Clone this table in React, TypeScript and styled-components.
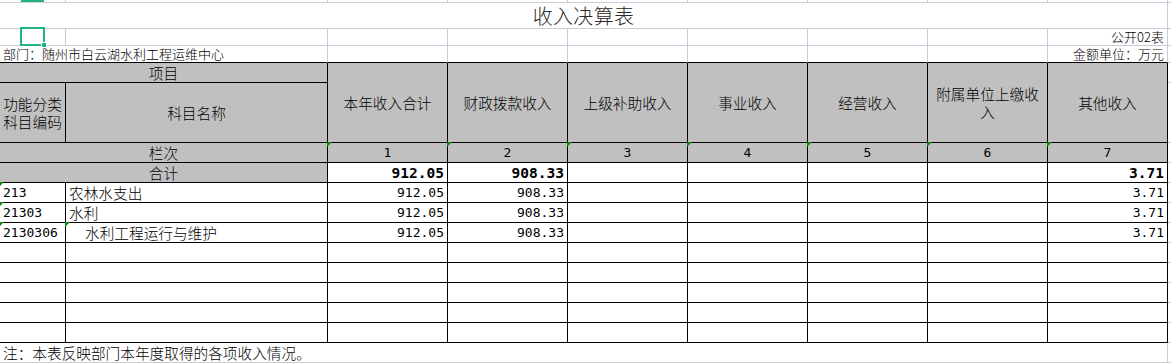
import React from "react";
import styled, { createGlobalStyle, css } from "styled-components";

const GRID = "#c6ccd8";
const INK = "#000";
const HEAD = "#c0c0c0";
const MARK = "#0a8a0a";
const SELECT = "#21b47b";
const CJK = `"Noto Sans CJK SC", "Noto Sans", sans-serif`;
const MONO = `"DejaVu Sans Mono", "Liberation Mono", monospace`;

const Global = createGlobalStyle`
  html, body { margin: 0; padding: 0; background: #fff; }
  body { font-family: ${CJK}; font-weight: 300; color: #000; overflow: hidden; }
`;

const Sheet = styled.div`
  display: grid;
  grid-template-columns: 66px 262px repeat(7, 120px) 3px;
  grid-template-rows: 3px 26px 17px 17px 20px 60px 20px 20px repeat(8, 20px) 20px;
  width: 1171px;
  height: 363px;
`;

type Line = "grid" | "ink";

type CellProps = {
  $span?: number;
  $rows?: number;
  $right?: Line;
  $bottom?: Line;
  $fill?: boolean;
  $align?: "left" | "center" | "right";
  $valign?: "top" | "center" | "bottom";
  $flag?: boolean;
  $wrap?: boolean;
};

const justify = { left: "flex-start", center: "center", right: "flex-end" };
const vert = { top: "flex-start", center: "center", bottom: "flex-end" };

const Cell = styled.div<CellProps>`
  position: relative;
  box-sizing: border-box;
  grid-column: span ${(p) => p.$span ?? 1};
  grid-row: span ${(p) => p.$rows ?? 1};
  border-right: 1px solid ${(p) => (p.$right === "ink" ? INK : GRID)};
  border-bottom: 1px solid ${(p) => (p.$bottom === "ink" ? INK : GRID)};
  background: ${(p) => (p.$fill ? HEAD : "#fff")};
  display: flex;
  justify-content: ${(p) => justify[p.$align ?? "left"]};
  align-items: ${(p) => vert[p.$valign ?? "bottom"]};
  text-align: ${(p) => p.$align ?? "left"};
  padding: 0 3px;
  font-size: 14.67px;
  line-height: 18px;
  white-space: ${(p) => (p.$wrap ? "pre-line" : "nowrap")};
  ${(p) =>
    p.$flag &&
    css`
      &::before {
        content: "";
        position: absolute;
        left: -1px;
        top: -1px;
        border-top: 5px solid ${MARK};
        border-right: 5px solid transparent;
      }
    `}
`;

const Title = styled.span`
  font-size: 20px;
  line-height: 26px;
  color: #2a2a2a;
  letter-spacing: 0.3px;
`;

const Small = styled.span`
  font-size: 13px;
  line-height: 16px;
`;

const Num = styled.span<{ $bold?: boolean }>`
  font-family: ${MONO};
  font-size: ${(p) => (p.$bold ? "14.5px" : "13px")};
  font-weight: ${(p) => (p.$bold ? 700 : 400)};
  line-height: 18px;
`;

const Indent = styled.span`
  padding-left: 16px;
`;

const Selection = styled.div`
  position: absolute;
  left: 20px;
  top: -2px;
  width: 25px;
  height: 19px;
  box-sizing: border-box;
  border: 2px solid ${SELECT};
  z-index: 3;

  &::after {
    content: "";
    position: absolute;
    right: -4px;
    bottom: -4px;
    width: 6px;
    height: 6px;
    background: ${SELECT};
    border: 1px solid #fff;
    box-sizing: border-box;
  }
`;

const TopBar = styled.div`
  position: absolute;
  left: 21px;
  top: 0;
  width: 23px;
  height: 2px;
  background: ${SELECT};
`;

const Edge = () => <Cell />;

const heads = [
  "本年收入合计",
  "财政拨款收入",
  "上级补助收入",
  "事业收入",
  "经营收入",
  "附属单位上缴收\n入",
  "其他收入",
];

const rows = [
  { code: "213", name: "农林水支出", indent: false },
  { code: "21303", name: "水利", indent: false },
  { code: "2130306", name: "水利工程运行与维护", indent: true },
];

const blanks = (n: number, props: CellProps = {}) =>
  Array.from({ length: n }, (_, i) => <Cell key={i} {...props} />);

export default function App() {
  return (
    <>
      <Global />
      <Sheet>
        {/* row above the title, mostly cut off */}
        <Cell>
          <TopBar />
        </Cell>
        {blanks(8)}
        <Edge />

        {/* title */}
        <Cell $span={9} $align="center" $valign="center">
          <Title>收入决算表</Title>
        </Cell>
        <Edge />

        <Cell>
          <Selection />
        </Cell>
        {blanks(7)}
        <Cell $align="right">
          <Small>公开02表</Small>
        </Cell>
        <Edge />

        <Cell $span={2} $bottom="ink">
          <Small>部门：随州市白云湖水利工程运维中心</Small>
        </Cell>
        {blanks(6, { $bottom: "ink" })}
        <Cell $align="right" $bottom="ink">
          <Small>金额单位：万元</Small>
        </Cell>
        <Edge />

        {/* header */}
        <Cell $span={2} $fill $right="ink" $bottom="ink" $align="center" $valign="center">
          项目
        </Cell>
        {heads.map((h) => (
          <Cell key={h} $rows={2} $fill $wrap $right="ink" $bottom="ink" $align="center" $valign="center">
            {h}
          </Cell>
        ))}
        <Edge />

        <Cell $fill $wrap $right="ink" $bottom="ink" $align="center" $valign="center">
          {"功能分类\n科目编码"}
        </Cell>
        <Cell $fill $right="ink" $bottom="ink" $align="center" $valign="center">
          科目名称
        </Cell>
        <Edge />

        <Cell $span={2} $fill $right="ink" $bottom="ink" $align="center">
          栏次
        </Cell>
        {[1, 2, 3, 4, 5, 6, 7].map((n) => (
          <Cell key={n} $fill $flag $right="ink" $bottom="ink" $align="center">
            <Num>{n}</Num>
          </Cell>
        ))}
        <Edge />

        <Cell $span={2} $fill $right="ink" $bottom="ink" $align="center">
          合计
        </Cell>
        <Cell $right="ink" $bottom="ink" $align="right">
          <Num $bold>912.05</Num>
        </Cell>
        <Cell $right="ink" $bottom="ink" $align="right">
          <Num $bold>908.33</Num>
        </Cell>
        {blanks(4, { $right: "ink", $bottom: "ink" })}
        <Cell $right="ink" $bottom="ink" $align="right">
          <Num $bold>3.71</Num>
        </Cell>
        <Edge />

        {rows.map((r) => (
          <React.Fragment key={r.code}>
            <Cell $flag $right="ink" $bottom="ink">
              <Num>{r.code}</Num>
            </Cell>
            <Cell $flag={r.indent} $right="ink" $bottom="ink">
              {r.indent ? <Indent>{r.name}</Indent> : r.name}
            </Cell>
            <Cell $right="ink" $bottom="ink" $align="right">
              <Num>912.05</Num>
            </Cell>
            <Cell $right="ink" $bottom="ink" $align="right">
              <Num>908.33</Num>
            </Cell>
            {blanks(4, { $right: "ink", $bottom: "ink" })}
            <Cell $right="ink" $bottom="ink" $align="right">
              <Num>3.71</Num>
            </Cell>
            <Edge />
          </React.Fragment>
        ))}

        {[0, 1, 2, 3, 4].map((i) => (
          <React.Fragment key={i}>
            {blanks(9, { $right: "ink", $bottom: "ink" })}
            <Edge />
          </React.Fragment>
        ))}

        <Cell $span={9}>注：本表反映部门本年度取得的各项收入情况。</Cell>
        <Edge />
      </Sheet>
    </>
  );
}
